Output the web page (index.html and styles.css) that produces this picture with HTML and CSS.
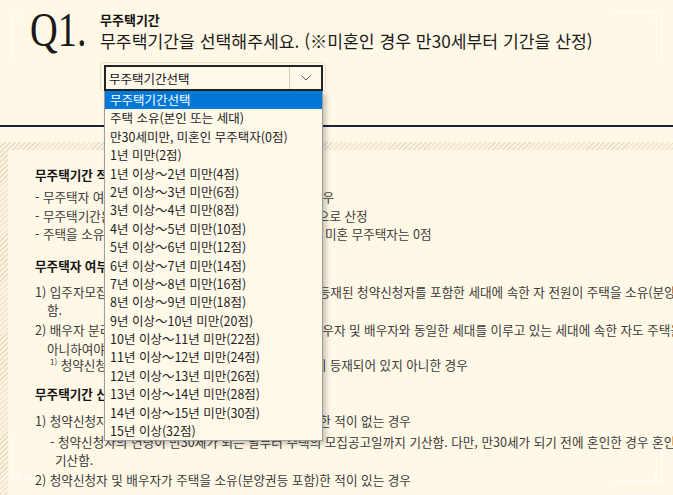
FILE: index.html
```html
<!DOCTYPE html>
<html lang="ko">
<head>
<meta charset="utf-8">
<title>무주택기간</title>
<link rel="stylesheet" href="styles.css">
</head>
<body>
<div class="page">
  <section class="question">
    <div class="q-head">
      <div class="q-num">Q1.</div>
      <div class="q-text">
        <div class="q-label">무주택기간</div>
        <div class="q-title">무주택기간을 선택해주세요. (※미혼인 경우 만30세부터 기간을 산정)</div>
      </div>
    </div>
    <div class="select-wrap">
      <div class="select">
        <span class="select-value">무주택기간선택</span>
        <span class="select-arrow">
          <svg width="10" height="6" viewBox="0 0 10 6"><polyline points="0.5,0.5 5,5 9.5,0.5" fill="none" stroke="#5a5a5a" stroke-width="1"/></svg>
        </span>
        <ul class="options">
          <li class="active">무주택기간선택</li>
          <li>주택 소유(본인 또는 세대)</li>
          <li>만30세미만, 미혼인 무주택자(0점)</li>
          <li>1년 미만(2점)</li>
          <li>1년 이상～2년 미만(4점)</li>
          <li>2년 이상～3년 미만(6점)</li>
          <li>3년 이상～4년 미만(8점)</li>
          <li>4년 이상～5년 미만(10점)</li>
          <li>5년 이상～6년 미만(12점)</li>
          <li>6년 이상～7년 미만(14점)</li>
          <li>7년 이상～8년 미만(16점)</li>
          <li>8년 이상～9년 미만(18점)</li>
          <li>9년 이상～10년 미만(20점)</li>
          <li>10년 이상～11년 미만(22점)</li>
          <li>11년 이상～12년 미만(24점)</li>
          <li>12년 이상～13년 미만(26점)</li>
          <li>13년 이상～14년 미만(28점)</li>
          <li>14년 이상～15년 미만(30점)</li>
          <li>15년 이상(32점)</li>
        </ul>
      </div>
    </div>
  </section>

  <section class="info">
    <div class="info-inner">
      <div class="sec">
        <h4 class="sec-title">무주택기간 적용기준</h4>
        <ul class="dash-list">
          <li>- 무주택자 여부는 세대원 모두 주택을 소유하지 않은 경우</li>
          <li>- 무주택기간은 만30세 이후부터 무주택자로 있던 기간으로 산정</li>
          <li>- 주택을 소유한 사실이 없었던 경우에도 만30세 미만의 미혼 무주택자는 0점</li>
        </ul>
      </div>
      <div class="sec">
        <h4 class="sec-title">무주택자 여부 판단기준</h4>
        <ol class="num-list">
          <li>1) 입주자모집공고일 현재의 세대별 주민등록표등본에 등재된 청약신청자를 포함한 세대에 속한 자 전원이 주택을 소유(분양권등 포함)하지 아니하여야<br>함.</li>
          <li>2) 배우자 분리세대인 경우에라도 청약신청자 본인의 배우자 및 배우자와 동일한 세대를 이루고 있는 세대에 속한 자도 주택을 소유하지<br>아니하여야 함<sup class="fn">1)</sup>
            <p class="note"><sup class="fn">1)</sup> 청약신청자의 배우자가 청약신청자 주민등록등본에 등재되어 있지 아니한 경우</p>
          </li>
        </ol>
      </div>
      <div class="sec">
        <h4 class="sec-title">무주택기간 산정기준</h4>
        <ol class="num-list">
          <li>1) 청약신청자 및 배우자가 주택을 소유(분양권등 포함)한 적이 없는 경우
            <ul class="sub-list">
              <li>- 청약신청자의 연령이 만30세가 되는 날부터 주택의 모집공고일까지 기산함. 다만, 만30세가 되기 전에 혼인한 경우 혼인신고일부터<br>기산함.</li>
            </ul>
          </li>
          <li>2) 청약신청자 및 배우자가 주택을 소유(분양권등 포함)한 적이 있는 경우</li>
        </ol>
      </div>
    </div>
  </section>

  <span class="mark mark-tl"></span>
  <span class="mark mark-tr"></span>
  <span class="mark mark-bl"></span>
  <span class="mark mark-br"></span>
</div>
</body>
</html>
```

FILE: styles.css
```css
* {
  box-sizing: border-box;
  margin: 0;
  padding: 0;
}

html, body {
  width: 673px;
  height: 495px;
  overflow: hidden;
}

body {
  background: #fff8e6;
  font-family: "Noto Sans CJK KR", "Noto Sans", sans-serif;
  color: #333;
}

.page {
  position: relative;
  width: 673px;
  height: 495px;
  overflow: hidden;
}

/* ---------- question header ---------- */
.question {
  position: relative;
  height: 127px;
  padding: 6px 0 0 30px;
  border-bottom: 2px solid #17223f;
  z-index: 2;
}

.q-head {
  display: flex;
  align-items: flex-start;
}

.q-num {
  width: 70px;
  font-family: "Liberation Serif", "Times New Roman", serif;
  font-size: 48px;
  line-height: 48px;
  color: #1a1a1a;
  transform: scaleX(0.8);
  transform-origin: left center;
  white-space: nowrap;
}

.q-text {
  padding-top: 5px;
}

.q-label {
  font-size: 13px;
  font-weight: 700;
  line-height: 18px;
  color: #141414;
}

.q-title {
  font-size: 17.2px;
  line-height: 24px;
  color: #1c1c1c;
  white-space: nowrap;
}

/* ---------- select ---------- */
.select-wrap {
  width: 226px;
  height: 30px;
  margin: 8px 0 0 70px;
  padding: 2px 0 0 3px;
  border: 1px solid #ebe1cc;
  border-radius: 4px;
}

.select {
  position: relative;
  display: flex;
  align-items: center;
  width: 219px;
  height: 26px;
  border: 2px solid #242424;
  background: #fff9ec;
}

.select-value {
  flex: 1;
  padding-left: 3px;
  font-size: 12.5px;
  color: #111;
  white-space: nowrap;
}

.select-arrow {
  display: flex;
  align-items: center;
  justify-content: center;
  width: 32px;
  height: 100%;
  border-left: 1px solid #d3ccbf;
}

.options {
  position: absolute;
  top: 24px;
  left: -2px;
  width: 219px;
  list-style: none;
  background: #fff9ea;
  border: 1px solid #9c9c9c;
  border-top: 0;
  box-shadow: 3px 3px 5px rgba(0, 0, 0, 0.22);
  z-index: 10;
}

.options li {
  height: 18.4px;
  padding-left: 5px;
  font-size: 12.5px;
  line-height: 18.4px;
  color: #1e1e1e;
  white-space: nowrap;
}

.options li.active {
  background: #0078d7;
  color: #fff;
}

/* ---------- info box ---------- */
.info {
  margin-top: 15px;
  padding: 8px 0 0 8px;
  height: 360px;
  background: repeating-linear-gradient(135deg, #e8dbbf 0 1px, #fcf4e1 1px 3.5px);
}

.info-inner {
  width: 1000px;
  height: 100%;
  padding: 16px 0 0 27px;
  background: #fff8e6;
  font-size: 12.6px;
  line-height: 18.4px;
  color: #3a3a3a;
  white-space: nowrap;
}

.sec + .sec {
  margin-top: 13px;
}

.sec-title {
  font-size: 12.6px;
  font-weight: 700;
  color: #141414;
}

.dash-list {
  list-style: none;
  margin-top: 4px;
}

.num-list {
  list-style: none;
  margin-top: 8px;
}

.num-list > li {
  padding-left: 12px;
  text-indent: -12px;
}

.num-list > li + li {
  margin-top: 1.5px;
}

.fn {
  font-size: 8px;
  line-height: 0;
  vertical-align: 5px;
}

.note {
  margin-left: 3px;
  text-indent: 0;
  line-height: 14px;
}

.sub-list {
  list-style: none;
  margin-top: 3px;
  text-indent: 0;
}

.sub-list li {
  padding-left: 8px;
  text-indent: -5px;
}

/* ---------- decorative corner marks ---------- */
.mark {
  position: absolute;
  border: 0 solid #fff;
  z-index: 20;
  pointer-events: none;
}

.mark::after {
  content: "";
  position: absolute;
  width: 5px;
  height: 5px;
  border: 1px solid #fff;
}

.mark-tl {
  left: 12px;
  top: 12px;
  height: 46px;
  border-left-width: 1px;
}

.mark-tl::after {
  left: -1px;
  top: 0;
}

.mark-tr {
  left: 614px;
  top: 12px;
  width: 48px;
  height: 46px;
  border-top-width: 1px;
  border-right-width: 1px;
}

.mark-tr::after {
  right: -1px;
  top: -1px;
}

.mark-bl {
  left: 12px;
  top: 437px;
  width: 23px;
  height: 42px;
  border-left-width: 1px;
  border-bottom-width: 1px;
}

.mark-bl::after {
  left: -1px;
  bottom: -1px;
}

.mark-br {
  left: 614px;
  top: 450px;
  width: 48px;
  height: 32px;
  border-right-width: 1px;
  border-bottom-width: 1px;
}

.mark-br::after {
  right: -1px;
  bottom: -1px;
}
```
